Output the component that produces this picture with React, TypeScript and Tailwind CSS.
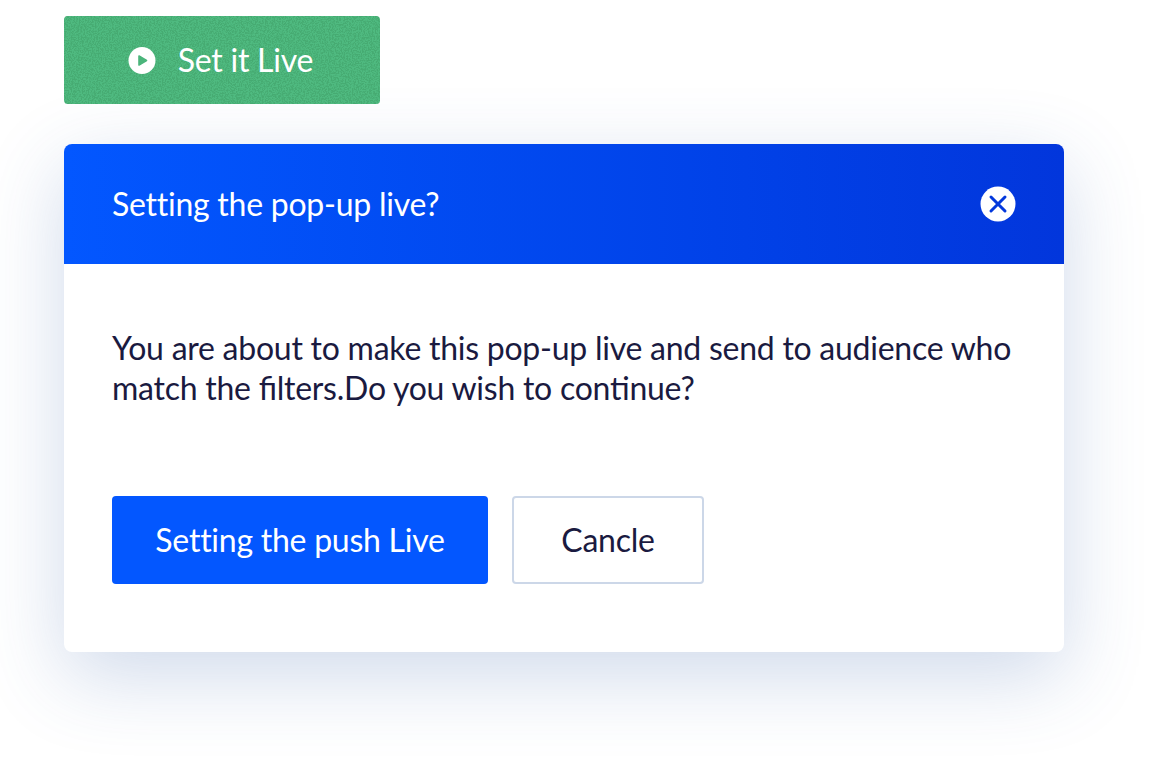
import React from "react";

function PlayIcon() {
  return (
    <svg width="28" height="28" viewBox="0 0 28 28">
      <circle cx="14" cy="14" r="13.5" fill="#fff" />
      <path d="M11 9.5 L18.5 14 L11 18.5 Z" fill="#4bb57b" stroke="#4bb57b" strokeWidth="1.6" strokeLinejoin="round" />
    </svg>
  );
}

function CloseIcon() {
  return (
    <svg width="36" height="36" viewBox="0 0 36 36">
      <circle cx="18" cy="18" r="17.5" fill="#fff" />
      <path d="M11 11 L25 25 M25 11 L11 25" stroke="#0338dc" strokeWidth="3" strokeLinecap="round" />
    </svg>
  );
}

export default function App() {
  return (
    <div className="h-[760px] w-[1160px] overflow-hidden bg-white pl-16 pt-4 font-['Lato',sans-serif] tracking-[-0.25px]">
      <button className="relative flex h-[88px] w-[316px] items-center justify-center gap-[22px] overflow-hidden rounded bg-[#4fba80] pr-[3px] text-[32px] text-white">
        {/* grainy texture of the button */}
        <svg className="absolute inset-0 h-full w-full" aria-hidden="true">
          <filter id="grain" x="0" y="0" width="100%" height="100%" colorInterpolationFilters="sRGB">
            <feTurbulence type="fractalNoise" baseFrequency="0.7" numOctaves="2" seed="4" />
            <feColorMatrix values="0 0 0 0 0.25  0 0 0 0 0.62  0 0 0 0 0.4  0 0 0 5 -2.1" />
          </filter>
          <rect width="100%" height="100%" filter="url(#grain)" opacity="0.55" />
        </svg>
        <span className="relative translate-y-[0.5px]"><PlayIcon /></span>
        <span className="relative">Set it Live</span>
      </button>

      <div className="mt-10 w-[1000px] overflow-hidden rounded-lg bg-white shadow-[0_24px_80px_rgba(60,100,170,0.24)]">
        <div className="flex h-[120px] items-center justify-between bg-gradient-to-r from-[#0357ff] to-[#0236dc] px-12 text-[32px] text-white">
          <span>Setting the pop-up live?</span>
          <CloseIcon />
        </div>
        <div className="px-12 pb-[68px] pt-[64px]">
          <p className="text-[32px] leading-[40px] text-[#1a1a40] [font-feature-settings:'liga']">
            You are about to make this pop-up live and send to audience who match the filters.Do you wish to continue?
          </p>
          <div className="mt-[88px] flex gap-6 text-[32px]">
            <button className="h-[88px] w-[376px] rounded bg-[#0357ff] text-white">Setting the push Live</button>
            <button className="h-[88px] w-[192px] rounded border-2 border-[#ccd7e8] bg-white text-[#1a1a40]">Cancle</button>
          </div>
        </div>
      </div>
    </div>
  );
}
